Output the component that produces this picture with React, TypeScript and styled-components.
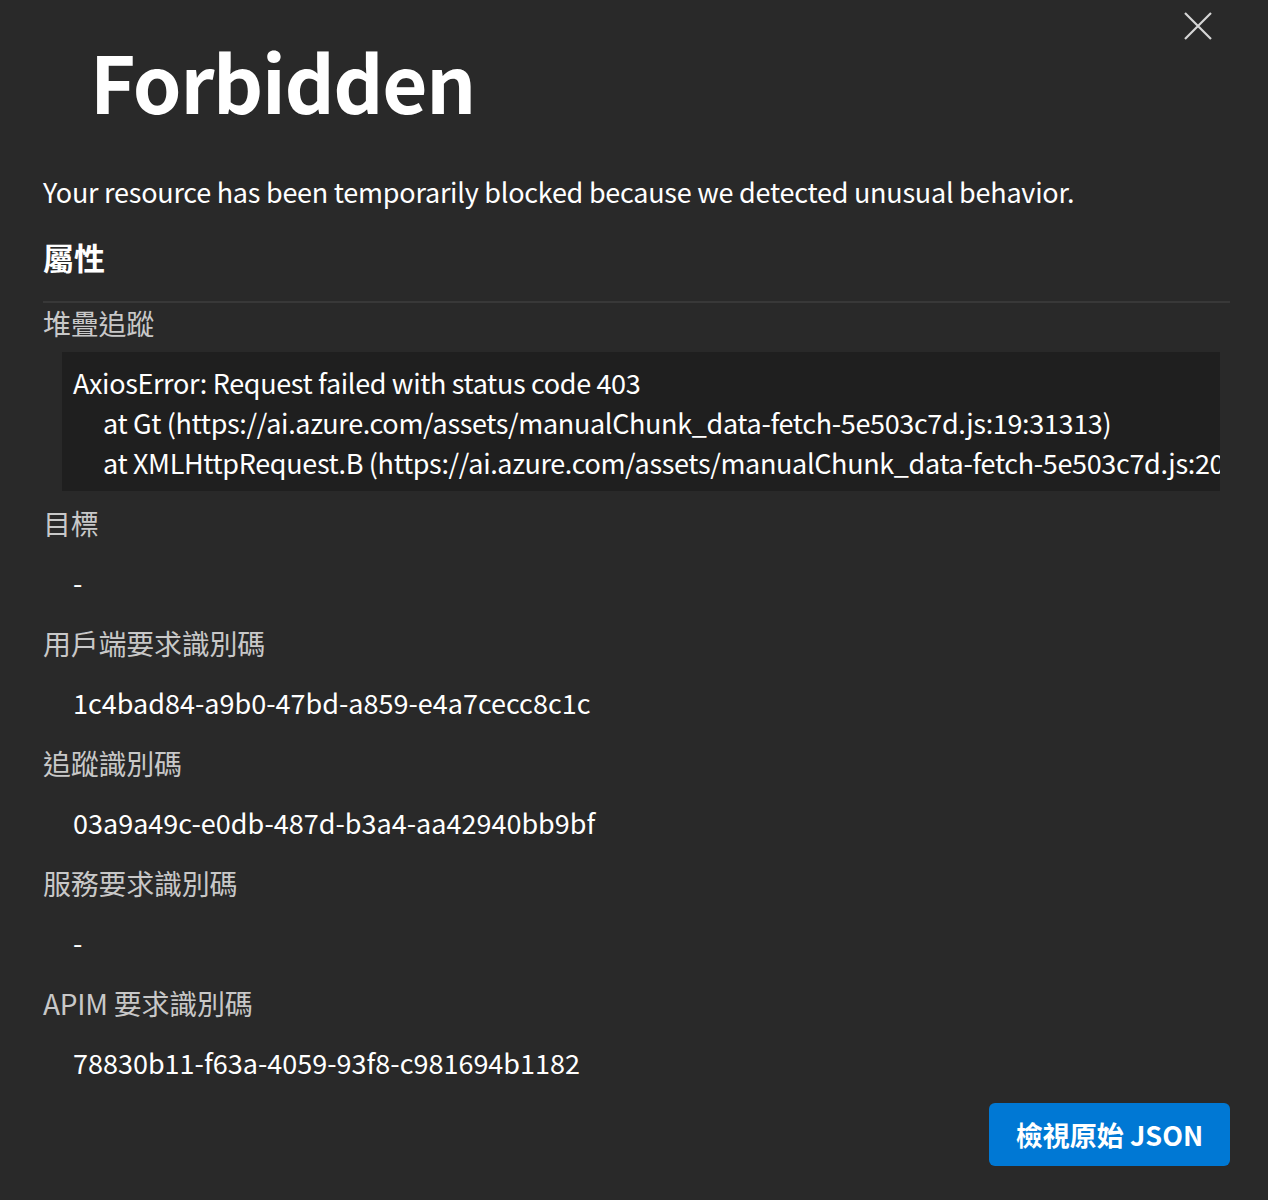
import React from "react";
import styled, { createGlobalStyle } from "styled-components";

const Global = createGlobalStyle`
  html, body { margin: 0; padding: 0; background: #292929; }
  body { font-family: "Noto Sans CJK TC", "Noto Sans", sans-serif; color: #ffffff; }
`;

const Dialog = styled.div`
  box-sizing: border-box;
  width: 1268px;
  min-height: 1200px;
  background: #292929;
  padding: 0 38px 0 43px;
  position: relative;
`;

const Header = styled.header`
  display: flex;
  align-items: flex-start;
`;

const Title = styled.h1`
  margin: 30px 0 0 47px;
  font-size: 78px;
  line-height: 100px;
  font-weight: 700;
  letter-spacing: -1.3px;
  color: #ffffff;
`;

const CloseButton = styled.button`
  position: absolute;
  top: 12px;
  right: 56px;
  width: 28px;
  height: 28px;
  padding: 0;
  border: none;
  background: transparent;
  cursor: pointer;
  display: flex;
  align-items: center;
  justify-content: center;
`;

const Message = styled.p`
  margin: 42px 0 0;
  font-size: 27px;
  line-height: 40px;
  letter-spacing: -0.25px;
  color: #ffffff;
`;

const SectionTitle = styled.h2`
  margin: 23px 0 0;
  padding-bottom: 22px;
  border-bottom: 2px solid #383838;
  font-size: 31px;
  line-height: 44px;
  font-weight: 700;
`;

const Label = styled.div`
  font-size: 28px;
  line-height: 40px;
  letter-spacing: -0.25px;
  color: #c8c8c8;
`;

const Value = styled.div`
  margin: 20px 0 20px 30px;
  font-size: 27px;
  line-height: 40px;
  letter-spacing: 0;
  color: #ffffff;
`;

const CodeBlock = styled.div`
  margin: 9px 10px 12px 19px;
  padding: 11px 11px 8px;
  background: #1f1f1f;
  overflow: hidden;
  font-size: 27px;
  line-height: 40px;
  letter-spacing: -0.35px;
  color: #ffffff;
`;

const CodeLine = styled.div<{ $indent?: boolean }>`
  white-space: pre;
  padding-left: ${(p) => (p.$indent ? "30px" : "0")};
`;

const Footer = styled.div`
  display: flex;
  justify-content: flex-end;
`;

const PrimaryButton = styled.button`
  width: 241px;
  height: 63px;
  border: none;
  border-radius: 6px;
  background: #0078d4;
  color: #ffffff;
  font-family: inherit;
  font-size: 27px;
  font-weight: 700;
  cursor: pointer;
`;

const fields: { label: string; value: string }[] = [
  { label: "目標", value: "-" },
  { label: "用戶端要求識別碼", value: "1c4bad84-a9b0-47bd-a859-e4a7cecc8c1c" },
  { label: "追蹤識別碼", value: "03a9a49c-e0db-487d-b3a4-aa42940bb9bf" },
  { label: "服務要求識別碼", value: "-" },
  { label: "APIM 要求識別碼", value: "78830b11-f63a-4059-93f8-c981694b1182" },
];

const stack = [
  "AxiosError: Request failed with status code 403",
  "at Gt (https://ai.azure.com/assets/manualChunk_data-fetch-5e503c7d.js:19:31313)",
  "at XMLHttpRequest.B (https://ai.azure.com/assets/manualChunk_data-fetch-5e503c7d.js:20",
];

export default function App() {
  return (
    <>
      <Global />
      <Dialog>
        <Header>
          <Title>Forbidden</Title>
          <CloseButton aria-label="Close">
            <svg width="28" height="28" viewBox="0 0 28 28">
              <path d="M1 1 L27 27 M27 1 L1 27" stroke="#d6d6d6" strokeWidth="2.2" />
            </svg>
          </CloseButton>
        </Header>
        <Message>
          Your resource has been temporarily blocked because we detected unusual behavior.
        </Message>
        <SectionTitle>屬性</SectionTitle>
        <Label>堆疊追蹤</Label>
        <CodeBlock>
          {stack.map((line, i) => (
            <CodeLine key={i} $indent={i > 0}>
              {line}
            </CodeLine>
          ))}
        </CodeBlock>
        {fields.map((f) => (
          <React.Fragment key={f.label}>
            <Label>{f.label}</Label>
            <Value>{f.value}</Value>
          </React.Fragment>
        ))}
        <Footer>
          <PrimaryButton>檢視原始 JSON</PrimaryButton>
        </Footer>
      </Dialog>
    </>
  );
}
